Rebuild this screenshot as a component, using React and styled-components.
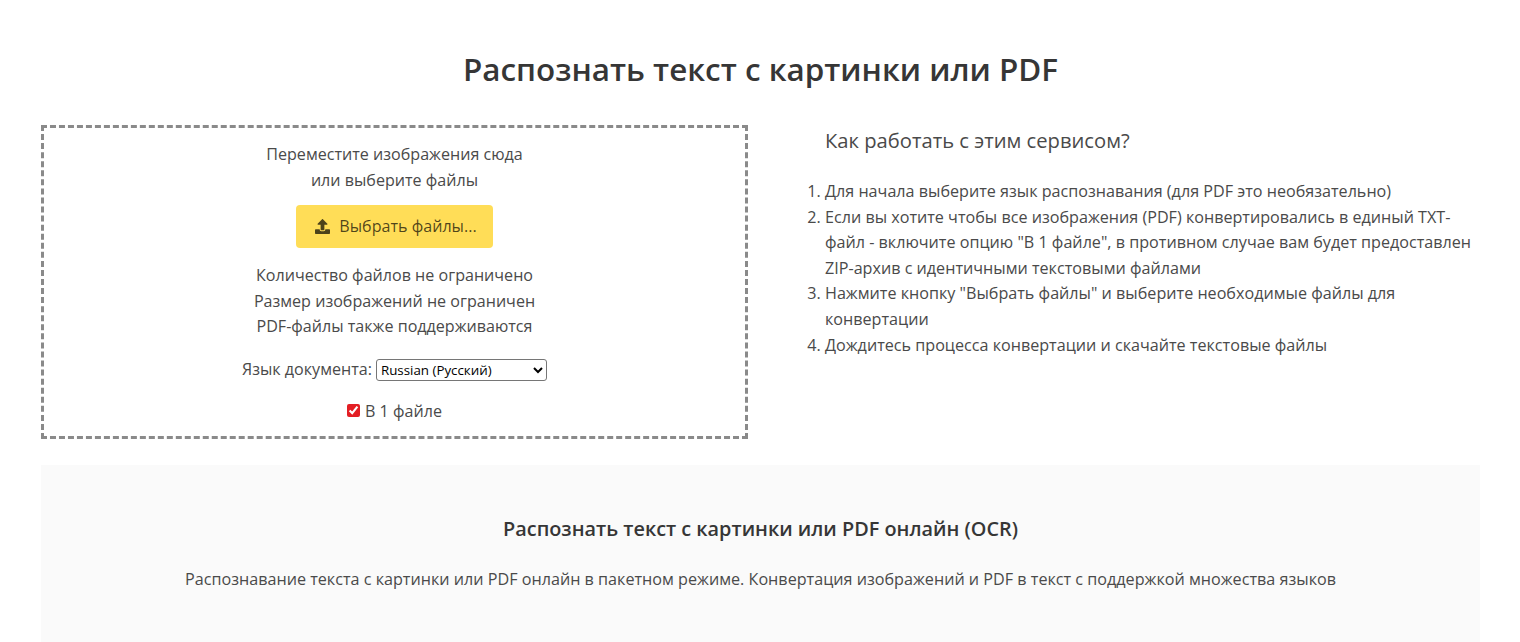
import React from "react";
import styled, { createGlobalStyle } from "styled-components";

const GlobalStyle = createGlobalStyle`
  html, body {
    margin: 0;
    padding: 0;
    background: #fff;
    overflow: hidden;
  }
  body {
    font-family: "Open Sans", "Noto Sans", "Liberation Sans", sans-serif;
    font-size: 16px;
    line-height: 25.6px;
    color: #4a4a4a;
  }
`;

const Page = styled.div`
  height: 642px;
  padding: 0 40px 0 41px;
  overflow: hidden;
`;

const Title = styled.h1`
  margin: 0;
  padding-top: 46px;
  height: 125px;
  box-sizing: border-box;
  text-align: center;
  font-size: 31.4px;
  line-height: 45px;
  font-weight: 600;
  color: #363636;
`;

const Columns = styled.div`
  display: flex;
  height: 340px;
`;

const DropZone = styled.div`
  width: 707px;
  height: 314px;
  box-sizing: border-box;
  border: 3px dashed #8a8a8a;
  padding-top: 14px;
  text-align: center;
  font-size: 16.1px;
`;

const Line = styled.div``;

const Group = styled.div`
  margin-top: ${(p) => p.$top}px;
`;

const YellowButton = styled.button`
  display: inline-flex;
  align-items: center;
  justify-content: center;
  gap: 9px;
  width: 197px;
  height: 43px;
  margin-top: 12px;
  padding: 0 0 0 3px;
  border: none;
  border-radius: 4px;
  background: #ffdd57;
  color: rgba(0, 0, 0, 0.7);
  font: inherit;
  cursor: pointer;
`;

const LangRow = styled.div`
  margin-top: 17px;
  display: flex;
  justify-content: center;
  align-items: center;
  gap: 4px;
  height: 26px;
`;

const LangSelect = styled.select`
  width: 171px;
  height: 22px;
  font-family: "Open Sans", "Noto Sans", sans-serif;
  font-size: 13.33px;
  color: #000;
  background: #fff;
  border: 1px solid #767676;
  border-radius: 3px;
`;

const CheckRow = styled.label`
  margin-top: 16px;
  display: flex;
  justify-content: center;
  align-items: center;
  gap: 5px;
  height: 26px;
`;

const Check = styled.input`
  margin: 0 0 3px;
  width: 13px;
  height: 13px;
  accent-color: #e31e24;
`;

const Help = styled.div`
  flex: 1;
  padding-left: 60px;
`;

const HelpTitle = styled.h2`
  margin: 0;
  padding: 2px 0 0 17px;
  font-size: 20.2px;
  line-height: 27px;
  font-weight: 400;
  color: #4a4a4a;
`;

const Steps = styled.ol`
  margin: 25px 0 0;
  padding: 0 0 0 17px;
  font-size: 16.15px;
`;

const InfoBox = styled.section`
  background: #fafafa;
  height: 200px;
  text-align: center;
  padding-top: 49px;
  box-sizing: border-box;
`;

const InfoTitle = styled.h2`
  margin: 0;
  font-size: 19.85px;
  line-height: 30px;
  font-weight: 600;
  color: #363636;
`;

const InfoText = styled.p`
  margin: 23px 0 0;
  font-size: 16.16px;
`;

function UploadIcon() {
  return (
    <svg width="15" height="15" viewBox="0 0 512 512" fill="currentColor" aria-hidden="true">
      <path d="M296 384h-80c-13.300 0-24-10.700-24-24V192h-87.700c-17.800 0-26.700-21.500-14.100-34.100L242.300 5.700c7.500-7.500 19.800-7.500 27.300 0l152.200 152.200c12.600 12.600 3.700 34.100-14.100 34.100H320v168c0 13.300-10.700 24-24 24zm216-8v112c0 13.300-10.700 24-24 24H24c-13.300 0-24-10.700-24-24V376c0-13.300 10.700-24 24-24h136v8c0 30.900 25.100 56 56 56h80c30.900 0 56-25.100 56-56v-8h136c13.300 0 24 10.700 24 24z" />
    </svg>
  );
}

export default function App() {
  return (
    <>
      <GlobalStyle />
      <Page>
        <Title>Распознать текст с картинки или PDF</Title>
        <Columns>
          <DropZone>
            <Line>Переместите изображения сюда</Line>
            <Line>или выберите файлы</Line>
            <YellowButton>
              <UploadIcon />
              Выбрать файлы...
            </YellowButton>
            <Group $top={15}>
              <Line>Количество файлов не ограничено</Line>
              <Line>Размер изображений не ограничен</Line>
              <Line>PDF-файлы также поддерживаются</Line>
            </Group>
            <LangRow>
              Язык документа:
              <LangSelect defaultValue="rus">
                <option value="rus">Russian (Русский)</option>
              </LangSelect>
            </LangRow>
            <CheckRow>
              <Check type="checkbox" defaultChecked />
              В 1 файле
            </CheckRow>
          </DropZone>
          <Help>
            <HelpTitle>Как работать с этим сервисом?</HelpTitle>
            <Steps>
              <li>Для начала выберите язык распознавания (для PDF это необязательно)</li>
              <li>
                Если вы хотите чтобы все изображения (PDF) конвертировались в единый TXT-файл -
                включите опцию "В 1 файле", в противном случае вам будет предоставлен ZIP-архив с
                идентичными текстовыми файлами
              </li>
              <li>Нажмите кнопку "Выбрать файлы" и выберите необходимые файлы для конвертации</li>
              <li>Дождитесь процесса конвертации и скачайте текстовые файлы</li>
            </Steps>
          </Help>
        </Columns>
        <InfoBox>
          <InfoTitle>Распознать текст с картинки или PDF онлайн (OCR)</InfoTitle>
          <InfoText>
            Распознавание текста с картинки или PDF онлайн в пакетном режиме. Конвертация изображений и
            PDF в текст с поддержкой множества языков
          </InfoText>
        </InfoBox>
      </Page>
    </>
  );
}
